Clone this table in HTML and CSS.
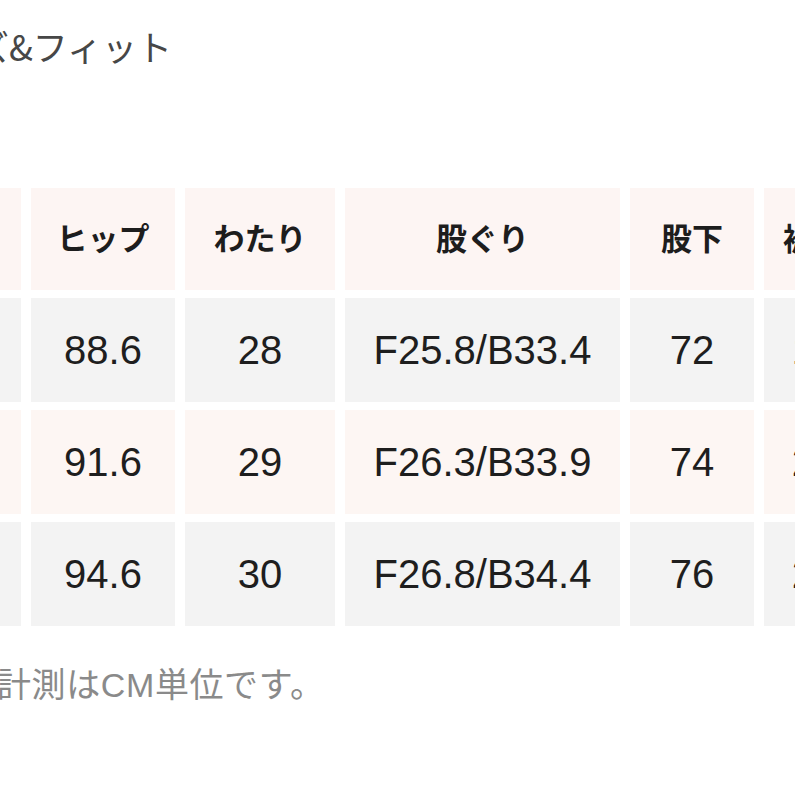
FILE: index.html
```html
<!DOCTYPE html>
<html lang="ja">
<head>
<meta charset="utf-8">
<title>サイズ&フィット</title>
<link rel="stylesheet" href="styles.css">
</head>
<body>
<main class="page">
  <h2 class="title">サイズ&amp;フィット</h2>
  <div class="size-table">
    <div class="cell head"></div>
    <div class="cell head">ヒップ</div>
    <div class="cell head">わたり</div>
    <div class="cell head">股ぐり</div>
    <div class="cell head">股下</div>
    <div class="cell head">裾幅</div>

    <div class="cell odd"></div>
    <div class="cell odd">88.6</div>
    <div class="cell odd">28</div>
    <div class="cell odd">F25.8/B33.4</div>
    <div class="cell odd">72</div>
    <div class="cell odd">19</div>

    <div class="cell even"></div>
    <div class="cell even">91.6</div>
    <div class="cell even">29</div>
    <div class="cell even">F26.3/B33.9</div>
    <div class="cell even">74</div>
    <div class="cell even">20</div>

    <div class="cell odd"></div>
    <div class="cell odd">94.6</div>
    <div class="cell odd">30</div>
    <div class="cell odd">F26.8/B34.4</div>
    <div class="cell odd">76</div>
    <div class="cell odd">21</div>
  </div>
  <p class="note">計測はCM単位です。</p>
</main>
</body>
</html>
```
FILE: styles.css
```css
html, body {
  margin: 0;
  padding: 0;
  background: #ffffff;
}

body {
  font-family: "Liberation Sans", "Noto Sans CJK JP", sans-serif;
}

.page {
  width: 795px;
  height: 795px;
  overflow: hidden;
}

.title {
  margin: 0 0 0 -95px;
  padding-top: 24px;
  font-family: "Noto Sans CJK JP", sans-serif;
  font-weight: 400;
  font-size: 35px;
  line-height: 44px;
  color: #474747;
  white-space: nowrap;
}

.size-table {
  display: grid;
  grid-template-columns: 140px 144px 150px 275px 124px 100px;
  grid-template-rows: 102px;
  grid-auto-rows: 104px;
  gap: 8px 10px;
  width: max-content;
  margin: 120px 0 0 -119px;
}

.cell {
  display: flex;
  align-items: center;
  justify-content: center;
  font-family: "Liberation Sans", "Noto Sans CJK JP", sans-serif;
  font-size: 40px;
  color: #1e1e1e;
  white-space: nowrap;
}

.head {
  padding-bottom: 6px;
  box-sizing: border-box;
  background: #fdf5f3;
  font-family: "Noto Sans CJK JP", sans-serif;
  font-weight: 700;
  font-size: 31px;
  color: #1d1d1d;
}

.odd {
  background: #f3f3f3;
}

.even {
  background: #fdf6f3;
}

.note {
  margin: 37px 0 0 -3px;
  font-family: "Liberation Sans", "Noto Sans CJK JP", sans-serif;
  font-size: 34px;
  letter-spacing: 0.6px;
  line-height: 44px;
  color: #8a8a8a;
  white-space: nowrap;
}
```
